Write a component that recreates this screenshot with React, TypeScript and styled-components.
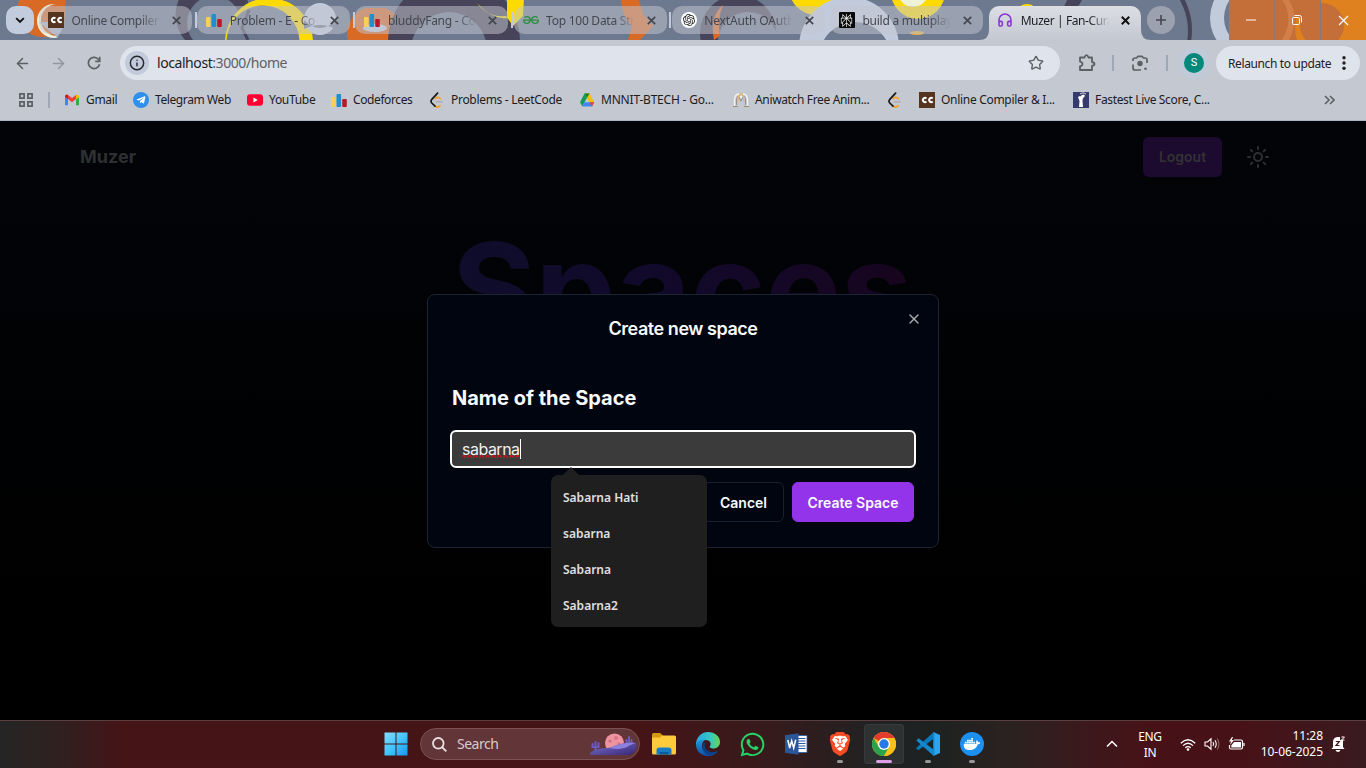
import React from "react";
import styled, { createGlobalStyle } from "styled-components";
import { ArrowLeft, ArrowRight, Headphones, Info, Star, Sun, X } from "lucide-react";
import { SiBrave, SiDocker, SiGeeksforgeeks, SiOpenai, SiPerplexity } from "react-icons/si";
import { FaTelegramPlane, FaWhatsapp } from "react-icons/fa";

const ui = `"Noto Sans", "Open Sans", sans-serif`;
const page = `Inter, sans-serif`;

const Global = createGlobalStyle`
  * { box-sizing: border-box; }
  body { margin: 0; background: #000; overflow: hidden; }
  svg { display: block; flex: none; }
  button { font: inherit; border: 0; padding: 0; }
`;

const Screen = styled.div`
  width: 1366px;
  height: 768px;
  display: flex;
  flex-direction: column;
  font-family: ${ui};
  overflow: hidden;
`;

/* ---------- tab strip ---------- */
const TabStrip = styled.div`
  position: relative;
  height: 40px;
  flex: none;
  display: flex;
  background: #6d798e;
  overflow: hidden;
`;
const StripArt = styled.svg`
  position: absolute;
  inset: 0;
`;
const TabSearch = styled.button`
  position: relative;
  width: 28px;
  height: 28px;
  margin: 6px 6px 0 6px;
  border-radius: 10px;
  background: #c2ccdc;
  display: grid;
  place-items: center;
  flex: none;
`;
const TabRow = styled.div`
  display: flex;
`;
const Tab = styled.div<{ $active?: boolean }>`
  position: relative;
  width: ${(p) => (p.$active ? 153 : 158.2)}px;
  height: 28px;
  margin-top: 6px;
  flex: none;
  display: flex;
  align-items: center;
  padding-left: 8px;
  &::before {
    content: "";
    position: absolute;
    z-index: 0;
    left: ${(p) => (p.$active ? 0 : -1)}px;
    top: 0;
    width: ${(p) => (p.$active ? 152 : 153)}px;
    height: ${(p) => (p.$active ? 34 : 28)}px;
    border-radius: ${(p) => (p.$active ? "10px 10px 0 0" : "10px")};
    background: ${(p) => (p.$active ? "linear-gradient(#dcdee4, #c4c8d1)" : "rgba(193,197,207,.52)")};
  }
  > * { position: relative; }
`;
const TabTitle = styled.span<{ $active?: boolean; $ls: number }>`
  width: 89px;
  margin-left: 7.500px;
  padding-top: 1px;
  white-space: nowrap;
  font-size: 12px;
  line-height: 18px;
  letter-spacing: ${(p) => p.$ls}px;
  color: ${(p) => (p.$active ? "#1d1e22" : "#45474e")};
  mask-image: linear-gradient(90deg, #000 68px, transparent 89px);
`;
const TabClose = styled.span`
  width: 16px;
  display: grid;
  place-items: center;
  margin-left: 8px;
`;
const TabDivider = styled.i`
  width: 2px;
  height: 16px;
  background: #c2cbda;
  margin-left: 10px;
`;
const Flare = styled.svg<{ $left: number }>`
  && {
    position: absolute;
    top: 24px;
    left: ${(p) => p.$left}px;
  }
`;
const NewTab = styled.button`
  position: relative;
  width: 28px;
  height: 28px;
  margin: 6px 0 0 5px;
  border-radius: 50%;
  background: #9ba1af;
  display: grid;
  place-items: center;
`;
const WindowControls = styled.div`
  position: relative;
  margin-left: auto;
  display: flex;
  width: 137px;
`;
const WinButton = styled.div`
  width: 46px;
  height: 40px;
  padding-right: 2px;
  display: grid;
  place-items: center;
  border-right: 1px solid #85777a;
  &:last-child { border: 0; width: 45px; padding-right: 0; }
`;

/* ---------- toolbar ---------- */
const Toolbar = styled.div`
  height: 46px;
  flex: none;
  display: flex;
  align-items: center;
  background: #c4c8d1;
  color: #5c6066;
`;
const NavButton = styled.div<{ $ml: number; $dim?: boolean }>`
  margin-left: ${(p) => p.$ml}px;
  opacity: ${(p) => (p.$dim ? 0.45 : 1)};
`;
const AddressBar = styled.div`
  width: 940px;
  height: 34px;
  margin-left: 19px;
  padding: 0 16px 0 5px;
  border-radius: 17px;
  background: #dfe3eb;
  display: flex;
  align-items: center;
  flex: none;
`;
const SiteInfo = styled.div`
  width: 24px;
  height: 24px;
  border-radius: 50%;
  background: #c1cbdb;
  color: #26282c;
  display: grid;
  place-items: center;
`;
const Url = styled.div`
  flex: 1;
  margin-left: 8px;
  font-size: 14px;
  letter-spacing: -0.43px;
  line-height: 20px;
  color: #5d6066;
  b { font-weight: 400; color: #1f2023; }
`;
const Rule = styled.i<{ $ml: number; $mr?: number }>`
  width: 2px;
  height: 16px;
  margin-left: ${(p) => p.$ml}px;
  margin-right: ${(p) => p.$mr ?? 0}px;
  background: #a0a7b7;
  flex: none;
`;
const Profile = styled.div`
  width: 32px;
  height: 32px;
  margin-left: 10px;
  border-radius: 50%;
  background: #c0cad9;
  display: grid;
  place-items: center;
  flex: none;
  span {
    width: 20px;
    height: 20px;
    border-radius: 50%;
    background: #00897b;
    color: #fff;
    font: 11px/20px Roboto, sans-serif;
    text-align: center;
  }
`;
const Relaunch = styled.div`
  width: 144px;
  height: 34px;
  margin-left: 6px;
  padding-left: 12px;
  border-radius: 17px;
  background: #dfe3eb;
  color: #1f2023;
  display: flex;
  align-items: center;
  flex: none;
  font-size: 12px;
  letter-spacing: -0.38px;
  white-space: nowrap;
  svg { margin-left: auto; margin-right: 14px; }
`;
const Bookmarks = styled.div`
  height: 35px;
  flex: none;
  display: flex;
  align-items: center;
  padding: 0 0 7px 19px;
  background: #c4c8d1;
  border-bottom: 1px solid #a9b4c4;
`;
const Bookmark = styled.div<{ $w: number; $ls?: number }>`
  width: ${(p) => p.$w}px;
  flex: none;
  display: flex;
  align-items: center;
  gap: 6px;
  font-size: 12px;
  line-height: 18px;
  color: #1b1c1f;
  white-space: nowrap;
  letter-spacing: ${(p) => p.$ls ?? -0.3}px;
`;

/* ---------- web page ---------- */
const Viewport = styled.main`
  position: relative;
  height: 599px;
  flex: none;
  background: linear-gradient(#020408, #000 80%);
  font-family: ${page};
`;
const SiteHeader = styled.header`
  display: flex;
  align-items: center;
  height: 72px;
  padding: 0 96px 0 80px;
  color: #2e2f31;
`;
const Brand = styled.div`
  flex: 1;
  padding-bottom: 2px;
  font-size: 18px;
  font-weight: 700;
`;
const Logout = styled.button`
  width: 79px;
  height: 40px;
  margin-right: 24px;
  padding-bottom: 1px;
  border-radius: 6px;
  background: #1d0a2f;
  color: #323233;
  font-size: 14px;
  font-weight: 600;
`;
const Hero = styled.h1`
  margin: 32px 0 0;
  padding-right: 2px;
  text-align: center;
  font-size: 128px;
  line-height: 128px;
  font-weight: 700;
  letter-spacing: -0.5px;
  span {
    background: linear-gradient(90deg, #0f0d2b, #12092a 50%, #18051f);
    background-clip: text;
    -webkit-background-clip: text;
    color: transparent;
  }
`;
const Dialog = styled.section`
  position: absolute;
  left: 427px;
  top: 173px;
  width: 512px;
  height: 254px;
  padding: 24px 24px 0;
  border: 1px solid #1b2432;
  border-radius: 8px;
  background: #01050f;
  color: #f8fafc;
`;
const DialogTitle = styled.h2`
  margin: 0;
  text-align: center;
  font-size: 18px;
  line-height: 20px;
  font-weight: 600;
  letter-spacing: -0.45px;
`;
const DialogClose = styled.span`
  position: absolute;
  right: 16px;
  top: 16px;
  color: #a9abb0;
`;
const FieldLabel = styled.div`
  margin-top: 45px;
  font-size: 20px;
  line-height: 28px;
  font-weight: 700;
`;
const Field = styled.div`
  height: 38px;
  width: 466px;
  margin: 18px 0 0 -2px;
  padding-left: 10px;
  border: 2px solid #fff;
  border-radius: 6px;
  background: #3b3b3b;
  display: flex;
  align-items: center;
  font-size: 16px;
  letter-spacing: -0.5px;
  color: #f1f1f1;
`;
const Typed = styled.span`
  position: relative;
  line-height: 20px;
  border-right: 1px solid #fff;
  svg { position: absolute; left: 0; top: 16px; }
`;
const Actions = styled.div`
  display: flex;
  justify-content: flex-end;
  gap: 8px;
  margin-top: 14px;
`;
const Action = styled.button<{ $primary?: boolean }>`
  height: 40px;
  width: ${(p) => (p.$primary ? 122 : 81)}px;
  border-radius: 6px;
  border: 1px solid ${(p) => (p.$primary ? "#9333ea" : "#17202e")};
  background: ${(p) => (p.$primary ? "#9333ea" : "transparent")};
  color: #f8fafc;
  font-size: 14px;
  font-weight: 600;
`;
const Autofill = styled.ul`
  position: absolute;
  left: 551px;
  top: 354px;
  width: 156px;
  height: 152px;
  margin: 0;
  padding: 5px 12px 3px;
  list-style: none;
  border-radius: 7px;
  background: #1f1f1f;
  color: #e0e0e0;
  font: 600 12px/36px ${ui};
  svg { position: absolute; left: 12px; top: -8px; }
`;
const Suggestion = styled.li`
  height: 36px;
`;

/* ---------- taskbar ---------- */
const Taskbar = styled.footer`
  height: 48px;
  flex: none;
  display: flex;
  align-items: center;
  padding: 0 0 1px 375.500px;
  border-top: 1px solid #5b4042;
  background: linear-gradient(90deg, #252525 0, #2f201f 60px, #451417 120px, #451417 640px, #381a1b 760px, #222122 870px, #1d2221 930px, #2a2220 1010px, #3a191c 1080px, #471217 1150px, #471217 1240px, #391a1e 1366px);
  color: #fff;
`;
const TaskButton = styled.div<{ $active?: boolean; $running?: boolean }>`
  position: relative;
  width: 40px;
  height: 40px;
  margin-right: 4px;
  border-radius: 4px;
  display: grid;
  place-items: center;
  flex: none;
  background: ${(p) => (p.$active ? "#2e3131" : "transparent")};
  box-shadow: ${(p) => (p.$active ? "inset 0 0 0 1px #383b3b" : "none")};
  &::after {
    content: "";
    position: absolute;
    display: ${(p) => (p.$running || p.$active ? "block" : "none")};
    bottom: 1px;
    left: ${(p) => (p.$active ? 12 : 17)}px;
    width: ${(p) => (p.$active ? 16 : 6)}px;
    height: 3px;
    border-radius: 2px;
    background: ${(p) => (p.$active ? "#dca0e6" : "#98989a")};
  }
`;
const SearchBox = styled.div`
  width: 220px;
  height: 32px;
  margin: 0 4px 0 0.500px;
  padding: 0 2px 0 11px;
  border: 1px solid #7a5254;
  border-radius: 16px;
  background: #623538;
  display: flex;
  align-items: center;
  flex: none;
  font-size: 14px;
  letter-spacing: -0.5px;
  color: #d9cbcc;
  span { flex: 1; margin-left: 10px; padding-bottom: 2px; }
`;
const Tray = styled.div`
  margin-left: auto;
  display: flex;
  align-items: center;
  padding-right: 20px;
  font-size: 12px;
  line-height: 16px;
`;
const Language = styled.div`
  width: 30px;
  margin: 0 15px 0 17px;
  padding-top: 2px;
  text-align: center;
  letter-spacing: -0.3px;
`;
const Clock = styled.div`
  width: 69px;
  margin: 0 8px 0 9px;
  text-align: right;
  white-space: nowrap;
  letter-spacing: -0.03px;
`;
const TrayIcon = styled.svg`
  margin-left: 8px;
`;

/* ---------- icons ---------- */
const CodeChef = () => (
  <svg width="16" height="16" viewBox="0 0 16 16">
    <rect width="16" height="16" fill="#54331f" />
    <g fill="none" stroke="#fff" strokeWidth="2">
      <path d="M7.400 6.400A2.100 2.100 0 1 0 7.400 9.600" />
      <path d="M13.700 6.400A2.100 2.100 0 1 0 13.700 9.600" />
    </g>
  </svg>
);
const Codeforces = () => (
  <svg width="16" height="16" viewBox="0 0 16 16">
    <rect x="0" y="5" width="4.6" height="10" rx="1" fill="#f8cf57" />
    <rect x="5.5" y="2" width="4.6" height="13" rx="1" fill="#1f8fcf" />
    <rect x="11.2" y="7" width="4.6" height="8" rx="1" fill="#b7192b" />
  </svg>
);
const RoundLogo = styled.span<{ $bg: string; $fg: string; $square?: boolean }>`
  width: 16px;
  height: 16px;
  border-radius: ${(p) => (p.$square ? "1px" : "50%")};
  background: ${(p) => p.$bg};
  color: ${(p) => p.$fg};
  display: grid;
  place-items: center;
  flex: none;
`;
const LeetCode = () => (
  <svg width="16" height="16" viewBox="0 0 16 16" fill="none" strokeLinecap="round" strokeLinejoin="round" strokeWidth="1.7">
    <path d="M6.5 14.3c1.6 1.2 3.4.9 4.6-.7M6.5 6.5c1.5-1.5 3.2-1.5 4.8.3" stroke="#f5a21d" />
    <path d="M7.2 9.8h6" stroke="#aaa9ab" strokeWidth="1.3" />
    <path d="M8.6 1.2 2.8 7.4c-1 1.1-1 2.4 0 3.6l3.2 3.2" stroke="#181818" />
  </svg>
);
const Gmail = () => (
  <svg width="16" height="16" viewBox="0 0 16 16">
    <path d="M1 13.2V4l3 2.2v7z" fill="#4285f4" />
    <path d="M12 6.2 15 4v9.2h-3z" fill="#34a853" />
    <path d="M1 4.5C1 2.5 3 2.3 4 3.1l4 3 4-3v4L8 10.200 4 7.100z" fill="#ea4335" />
    <path d="M12 3.100c1.200-.8 3-.5 3 1.400v.8l-3 2.200z" fill="#fbbc04" />
    <path d="M1 4.500c0-2 2-2.200 3-1.400v4L1 5z" fill="#c5221f" />
  </svg>
);
const YouTube = () => (
  <svg width="16" height="16" viewBox="0 0 16 16">
    <rect y="2.300" width="16" height="11.400" rx="3" fill="#f03" />
    <path d="M6.400 5.500v5L10.700 8z" fill="#fff" />
  </svg>
);
const Drive = () => (
  <svg width="16" height="16" viewBox="0 0 16 16">
    <path d="M5.500 1.500h5L8 5.800 3.300 14.500 1 10.300z" fill="#0f9d58" />
    <path d="M5.500 1.500h5l4.700 8.800h-4.900L8 5.800z" fill="#fbbc04" />
    <path d="M5.500 1.500h5L8 5.800z" fill="#188038" />
    <path d="m3.300 14.500 2.400-4.200h9.500L13 14.500z" fill="#4285f4" />
    <path d="M10.500 10.300h4.700L13 14.500z" fill="#ea4335" />
  </svg>
);
const Aniwatch = () => (
  <svg width="16" height="16" viewBox="0 0 16 16" fill="none">
    <path d="M1.500 14V7.500C2 4 4 2 5.500 2L8 6l2.500-4C12 2 14 4 14.500 7.500V14" stroke="#f3f3f3" strokeWidth="1.300" />
    <path d="M3.500 13V7.500C4 5 5 4 5.500 4L8 9l2.500-5c1 0 2 2 2 3.500V13" stroke="#8f8f96" />
    <path d="M5 10C5 5 6.500 2 8 2s3 3 3 8" stroke="#e4b569" strokeWidth="1.300" />
    <path d="M0 14.500h5M11 14.500h5" stroke="#a08d70" />
  </svg>
);
const Cricket = () => (
  <svg width="16" height="16" viewBox="0 0 16 16">
    <rect width="16" height="16" fill="#363a6f" />
    <path d="M5 5c1-1 1.500-.8 2.200-.5L9 3l2-.4L12 4 9.800 6.500 9.500 9l.5 6H6L6.500 9z" fill="#fff" />
    <path d="M7 2c2-1.500 4-1.300 6 0" stroke="#dcdce8" fill="none" />
  </svg>
);
const Cross = ({ color, size = 9, w = 1.7 }: { color: string; size?: number; w?: number }) => (
  <svg width={size} height={size} viewBox="0 0 9 9" stroke={color} strokeWidth={w}>
    <path d="m.8.8 7.400 7.400M8.200.8.800 8.200" />
  </svg>
);
const Windows = () => (
  <svg width="24" height="24" viewBox="0 0 24 24">
    <defs>
      <linearGradient id="win" x1="0" y1="0" x2="1" y2="1">
        <stop stopColor="#84dcff" />
        <stop offset=".5" stopColor="#43c6ff" />
        <stop offset="1" stopColor="#1298f0" />
      </linearGradient>
    </defs>
    <path d="M.5.5h11v11H.5zM12.500.5h11v11h-11zM.5 12.500h11v11H.5zM12.500 12.500h11v11h-11z" fill="url(#win)" />
  </svg>
);
const Desert = () => (
  <svg width="48" height="26" viewBox="0 0 48 26">
    <defs>
      <linearGradient id="dune" x1="0" y1="0" x2="1" y2="1">
        <stop stopColor="#7d72cd" />
        <stop offset="1" stopColor="#352575" />
      </linearGradient>
    </defs>
    <circle cx="25.500" cy="12" r="9.500" fill="#ee93a0" />
    <circle cx="21" cy="10" r="1.500" fill="#cf6a80" />
    <circle cx="27" cy="7" r="2" fill="#d67688" />
    <circle cx="30" cy="13" r="1.700" fill="#d67688" />
    <path d="M6.500 20v-9M3.500 13v3h6v-4M40 15V6M37.500 9v3h5V9" fill="none" stroke="#6b5bc0" strokeWidth="2" strokeLinecap="round" />
    <path d="M1 22c4-4 12-5 18-5 8-1 10-6 28-5 2 5-1 11-8 12H3c-2 0-2-1-2-2" fill="url(#dune)" />
    <path d="M19 17c8-1 10-6 28-5-8 2-9 6-19 6z" fill="#8b80dc" />
  </svg>
);
const Folder = () => (
  <svg width="24" height="24" viewBox="0 0 24 24">
    <path d="M0 2.500Q0 1 1.500 1H8l3 2.500V8H0z" fill="#d79a0c" />
    <path d="M0 5.500h8l2-2h12.500Q24 3.500 24 5v16q0 1.500-1.500 1.500h-21Q0 22.500 0 21z" fill="#fccb3b" />
    <path d="M4.500 22.500v-4q0-3 3-3h9q3 0 3 3v4z" fill="#157cc5" />
    <path d="M7.500 22.500V20h9v2.500z" fill="#0b5a9b" />
  </svg>
);
const Edge = () => (
  <svg width="24" height="24" viewBox="0 0 24 24">
    <defs>
      <linearGradient id="edgeTop" x1="0" x2="1">
        <stop stopColor="#2aa5e0" />
        <stop offset=".6" stopColor="#35c8c5" />
        <stop offset="1" stopColor="#66d84c" />
      </linearGradient>
      <linearGradient id="edgeLow" x1="0" y1="0" x2="0" y2="1">
        <stop stopColor="#2097d8" />
        <stop offset="1" stopColor="#0f4fa8" />
      </linearGradient>
    </defs>
    <path d="M0 11C.8 4.500 6 0 12 0c7 0 12 4.500 12 10 0 4-3 6.500-6.500 6.500-2.500 0-4.500-1-3.500-2.500C16 11 13.500 8 9.500 8 5 8 1.500 10 0 14z" fill="url(#edgeTop)" />
    <path d="M0 12.500C1 9 5 7 9 8c-3 2-3.500 5.500-2.500 8.500C8 21 13 22 17 21c2-.5 4-1.500 5.300-2.300C20 22 16.500 24 12 24 5 24 0 19 0 12.500" fill="url(#edgeLow)" />
    <path d="M9.500 10.500C8 13 9 18 13.500 19.500c3 1 6.500.5 8.500-.7C20 22 16 23.200 13 23 7 22 5 15 7.500 11z" fill="#0b3f86" />
  </svg>
);
const Word = () => (
  <svg width="24" height="24" viewBox="0 0 24 24">
    <path d="M12 3.500h11v17H12z" fill="#fff" stroke="#2c5aa6" strokeWidth=".8" />
    <path d="M14 6.500h7.500M14 9h7.500M14 11.500h7.500M14 14h7.500M14 16.500h7.500" stroke="#2c5aa6" strokeWidth="1.100" />
    <path d="m1 3.200 13.500-2v21.600L1 20.800z" fill="#2b579a" />
    <path d="m3.800 8 1.900 8 2-7.200L9.700 16l2-8.300" fill="none" stroke="#fff" strokeWidth="1.500" />
  </svg>
);
const BraveMark = () => (
  <svg width="24" height="24" viewBox="0 0 24 24">
    <path d="m7 3 10 0 3 4-1 9-7 6-7-6L4 7z" fill="#fff" />
    <SiBrave size={24} color="#fb4b22" />
  </svg>
);
const Chrome = () => (
  <svg width="24" height="24" viewBox="0 0 24 24">
    <circle cx="12" cy="12" r="12" fill="#fbc116" />
    <path d="M12 12 1.600 6A12 12 0 0 1 22.400 6z" fill="#e33b2e" />
    <path d="M1.600 6A12 12 0 0 0 12 24l5.200-9L12 12 6.800 15z" fill="#2ba24c" />
    <path d="M12 6h10.400A12 12 0 0 1 12 24l5.200-9z" fill="#fbc116" />
    <circle cx="12" cy="12" r="6" fill="#fff" />
    <circle cx="12" cy="12" r="4.700" fill="#2978e8" />
  </svg>
);
const VSCode = () => (
  <svg width="24" height="24" viewBox="0 0 24 24">
    <path d="M17.500.3 1 15.300 0 16l2.300 2.200L18 6.500z" fill="#0879bd" />
    <path d="M17.500 23.700.3 8.500 2.500 6.300 18 17.700z" fill="#1488cc" />
    <path d="M17.300 0 24 3v18l-6.700 3V0z" fill="#2ba5ef" />
    <path d="m17.300 0 1 .5v23l-1 .5z" fill="#1580c4" />
  </svg>
);
const Puzzle = () => (
  <svg width="18" height="18" viewBox="0 0 18 18" fill="none" stroke="#5c6066" strokeWidth="1.800" strokeLinejoin="round">
    <path d="M2 3.500h4.500q.7-2.300 2-2.300t2 2.300H14V8q2.500.6 2.500 2t-2.500 2v4H2v-3.700q2.500-.5 2.500-2.300T2 7.600z" />
  </svg>
);
const Lens = () => (
  <svg width="16" height="16" viewBox="0 0 16 16" fill="none" stroke="#5c6066" strokeWidth="1.700">
    <path d="M1 6V5q0-2 2-2h1.500L6 1.300h4L11.500 3H13q2 0 2 2v3M1 9.500V13q0 2 2 2h6" />
    <circle cx="8" cy="8.500" r="2.700" fill="#5c6066" stroke="none" />
    <circle cx="13.500" cy="13.800" r="1.300" fill="#5c6066" stroke="none" />
  </svg>
);
const ThemeArt = () => (
  <StripArt width="1366" height="40" viewBox="0 0 1366 40">
    <circle cx="43" cy="11" r="26" fill="#d96a26" />
    <circle cx="54" cy="21" r="17" fill="#eef0dc" />
    <circle cx="57" cy="20" r="16" fill="#d96a26" />
    <path d="M39 22h40v18H60z" fill="#a9b2c4" />
    <path d="M66 0h120v40H56l8-14z" fill="#6d798e" />
    <circle cx="213" cy="15" r="37.500" fill="#474359" />
    <circle cx="214" cy="23" r="27" fill="#6d798e" />
    <circle cx="269" cy="42" r="44" fill="#fedb00" />
    <circle cx="263" cy="42" r="36.500" fill="#6d798e" />
    <path d="m249 10-7 18 6 12" fill="none" stroke="#474359" strokeWidth="3" />
    <circle cx="320" cy="19" r="16" fill="#c2cbdc" />
    <path d="M304 20q16 16 32 0v9q-16-8-32 0z" fill="#6d798e" />
    <circle cx="375" cy="34" r="28" fill="#d96a26" />
    <path d="M347 0h60v8h-60z" fill="#6d798e" />
    <circle cx="454" cy="42" r="66" fill="#474359" />
    <circle cx="449" cy="50" r="38" fill="#6d798e" />
    <ellipse cx="375" cy="28" rx="12" ry="4" fill="#c2cbdc" />
    <path d="M477 3q15 17 30 15V-2h17l-1 18-10 10-7-10q-18 2-29-13" fill="#fedb00" />
    <path d="M621 0h18l4 14 10 12-13 14h-12l4-14q-10-10-11-26" fill="#d96a26" />
    <circle cx="738" cy="33" r="38" fill="#474359" />
    <circle cx="748" cy="42" r="30" fill="#6d798e" />
    <path d="M723 5q-14 12-9 35l6-4q-3-17 3-31" fill="#d96a26" />
    <circle cx="816" cy="-12" r="27" fill="#fedb00" />
    <circle cx="849" cy="47" r="50" fill="#c2cbdc" />
    <circle cx="855" cy="58" r="36" fill="#6d798e" />
    <circle cx="918" cy="-8" r="27" fill="#fedb00" />
    <circle cx="913" cy="-8" r="15" fill="#eef3d8" />
    <ellipse cx="917" cy="33" rx="7" ry="2" fill="#dfaa46" />
    <circle cx="1027" cy="15" r="11" fill="#fedb00" />
    <circle cx="1126" cy="30" r="66" fill="#474359" />
    <circle cx="1125" cy="31" r="63" fill="#6d798e" />
    <path d="M1068 0h14l-6 10h-14z" fill="#474359" />
    <circle cx="1250" cy="18" r="40" fill="#c2cbdc" />
    <circle cx="1255" cy="18" r="31" fill="#6d798e" />
    <path d="M1229 0h137v40h-137z" fill="#c46e39" />
    <path d="M1283-4q17 22 0 48" fill="none" stroke="#d37f49" strokeWidth="6" />
    <circle cx="1331" cy="28" r="36" fill="#df811e" />
    <circle cx="1322" cy="25" r="22" fill="#c46e39" />
    <path d="M1296 0h24v5q-10 3-18 13h-6z" fill="#c46e39" />
    <path d="M1352 0h14v40h-18z" fill="#df811e" />
  </StripArt>
);

const tabs = [
  { title: "Online Compiler", icon: <CodeChef />, ls: -0.3 },
  { title: "Problem - E - Co", icon: <Codeforces />, ls: -0.25 },
  { title: "bluddyFang - Co", icon: <Codeforces />, ls: -0.25 },
  { title: "Top 100 Data Str", icon: <SiGeeksforgeeks size={16} color="#2f8d46" />, ls: -0.25 },
  { title: "NextAuth OAuth", icon: <RoundLogo $bg="#fff" $fg="#222"><SiOpenai size={12} /></RoundLogo>, ls: -0.15 },
  { title: "build a multiplay", icon: <RoundLogo $bg="#080808" $fg="#fff" $square><SiPerplexity size={13} /></RoundLogo>, ls: -0.25 },
];

const bookmarks = [
  { text: "Gmail", w: 69, icon: <Gmail /> },
  { text: "Telegram Web", w: 114, icon: <RoundLogo $bg="#2f8fec" $fg="#fff"><FaTelegramPlane size={10} /></RoundLogo>, ls: -0.4 },
  { text: "YouTube", w: 84, icon: <YouTube /> },
  { text: "Codeforces", w: 98, icon: <Codeforces />, ls: -0.4 },
  { text: "Problems - LeetCode", w: 150, icon: <LeetCode /> },
  { text: "MNNIT-BTECH - Go...", w: 154, icon: <Drive />, ls: -0.2 },
  { text: "Aniwatch Free Anim...", w: 154, icon: <Aniwatch />, ls: -0.35 },
  { text: "", w: 32, icon: <LeetCode /> },
  { text: "Online Compiler & I...", w: 154, icon: <CodeChef /> },
  { text: "Fastest Live Score, C...", w: 251, icon: <Cricket />, ls: -0.35 },
];

export default function App() {
  return (
    <Screen>
      <Global />
      <TabStrip>
        <ThemeArt />
        <TabSearch>
          <svg width="10" height="7" viewBox="0 0 10 7" fill="none" stroke="#111" strokeWidth="1.900"><path d="m1.200 1.200 3.800 3.800 3.800-3.800" /></svg>
        </TabSearch>
        <TabRow>
          {tabs.map((t, i) => (
            <Tab key={t.title}>
              {t.icon}
              <TabTitle $ls={t.ls}>{t.title}</TabTitle>
              <TabClose><Cross color="#45474e" /></TabClose>
              {i < tabs.length - 1 && <TabDivider />}
            </Tab>
          ))}
          <Tab $active>
            <Flare $left={-10} width="10" height="10" viewBox="0 0 10 10"><path d="M10 0v10H0Q10 10 10 0" fill="#c5c9d2" /></Flare>
            <Headphones size={16} color="#8a35d6" strokeWidth={2.400} />
            <TabTitle $active $ls={-0.4}>Muzer | Fan-Cura</TabTitle>
            <TabClose><Cross color="#111" w={2} /></TabClose>
            <Flare $left={152} width="10" height="10" viewBox="0 0 10 10"><path d="M0 0v10h10Q0 10 0 0" fill="#c5c9d2" /></Flare>
          </Tab>
        </TabRow>
        <NewTab>
          <svg width="10" height="10" viewBox="0 0 10 10" stroke="#45474e" strokeWidth="1.600"><path d="M5 0v10M0 5h10" /></svg>
        </NewTab>
        <WindowControls>
          <WinButton><svg width="10" height="2"><path d="M0 1h10" stroke="#fff" /></svg></WinButton>
          <WinButton>
            <svg width="10" height="10" viewBox="0 0 10 10" fill="none" stroke="#fff"><rect x=".5" y="2.500" width="7" height="7" rx="1" /><path d="M2.500.5h5q2 0 2 2v5" /></svg>
          </WinButton>
          <WinButton><Cross color="#fff" size={11} w={1} /></WinButton>
        </WindowControls>
      </TabStrip>

      <Toolbar>
        <NavButton $ml={14}><ArrowLeft size={17} strokeWidth={2.200} /></NavButton>
        <NavButton $ml={19} $dim><ArrowRight size={17} strokeWidth={2.200} /></NavButton>
        <NavButton $ml={20}>
          <svg width="14" height="14" viewBox="0 0 14 14" fill="none" stroke="currentColor" strokeWidth="1.700">
            <path d="M12.500 8.200A5.600 5.600 0 1 1 11 3l1.500 1.700" />
            <path d="M12.700.8v4.500H8.200" />
          </svg>
        </NavButton>
        <AddressBar>
          <SiteInfo><Info size={16} strokeWidth={2.200} /></SiteInfo>
          <Url><b>localhost</b>:3000/home</Url>
          <Star size={16} strokeWidth={2.100} />
        </AddressBar>
        <NavButton $ml={18}><Puzzle /></NavButton>
        <Rule $ml={16} />
        <NavButton $ml={18}><Lens /></NavButton>
        <Rule $ml={18} />
        <Profile><span>S</span></Profile>
        <Relaunch>
          Relaunch to update
          <svg width="4" height="14" viewBox="0 0 4 14" fill="#222"><circle cx="2" cy="1.800" r="1.700" /><circle cx="2" cy="7" r="1.700" /><circle cx="2" cy="12.200" r="1.700" /></svg>
        </Relaunch>
      </Toolbar>

      <Bookmarks>
        <svg width="14" height="14" viewBox="0 0 14 14" fill="none" stroke="#5c6066" strokeWidth="1.700">
          <path d="M.9.9h4.200v4.200H.9zM8.900.9h4.200v4.200H8.900zM.9 8.900h4.200v4.200H.9zM8.900 8.900h4.200v4.200H8.900z" />
        </svg>
        <Rule $ml={15} $mr={14} />
        {bookmarks.map((b, i) => (
          <Bookmark key={i} $w={b.w} $ls={b.ls}>{b.icon}{b.text}</Bookmark>
        ))}
        <svg width="11" height="10" viewBox="0 0 11 10" fill="none" stroke="#5c6066" strokeWidth="1.600"><path d="m1 1 4 4-4 4M6 1l4 4-4 4" /></svg>
      </Bookmarks>

      <Viewport>
        <SiteHeader>
          <Brand>Muzer</Brand>
          <Logout>Logout</Logout>
          <Sun size={24} strokeWidth={2} />
        </SiteHeader>
        <Hero><span>Spaces</span></Hero>
        <Dialog>
          <DialogTitle>Create new space</DialogTitle>
          <DialogClose><X size={16} strokeWidth={2} /></DialogClose>
          <FieldLabel>Name of the Space</FieldLabel>
          <Field>
            <Typed>
              sabarna
              <svg width="57" height="3" viewBox="0 0 57 3" fill="none">
                <path d="M0 2q1.500-3 3 0t3 0 3 0 3 0 3 0 3 0 3 0 3 0 3 0 3 0 3 0 3 0 3 0 3 0 3 0 3 0 3 0 3 0 3 0" stroke="#e0141c" strokeWidth="1.100" />
              </svg>
            </Typed>
          </Field>
          <Actions>
            <Action>Cancel</Action>
            <Action $primary>Create Space</Action>
          </Actions>
        </Dialog>
        <Autofill>
          <svg width="16" height="8" viewBox="0 0 16 8"><path d="M0 8 8 0l8 8z" fill="#1f1f1f" /></svg>
          <Suggestion>Sabarna Hati</Suggestion>
          <Suggestion>sabarna</Suggestion>
          <Suggestion>Sabarna</Suggestion>
          <Suggestion>Sabarna2</Suggestion>
        </Autofill>
      </Viewport>

      <Taskbar>
        <TaskButton><Windows /></TaskButton>
        <SearchBox>
          <svg width="15" height="15" viewBox="0 0 15 15" fill="none" stroke="#eadfe0" strokeWidth="1.800"><circle cx="6.300" cy="6.300" r="5.300" /><path d="m10 10 4.300 4.300" /></svg>
          <span>Search</span>
          <Desert />
        </SearchBox>
        <TaskButton><Folder /></TaskButton>
        <TaskButton><Edge /></TaskButton>
        <TaskButton><FaWhatsapp size={27} color="#25d366" /></TaskButton>
        <TaskButton><Word /></TaskButton>
        <TaskButton $running><BraveMark /></TaskButton>
        <TaskButton $active><Chrome /></TaskButton>
        <TaskButton $running><VSCode /></TaskButton>
        <TaskButton $running>
          <svg width="24" height="24" viewBox="0 0 24 24"><circle cx="12" cy="12" r="12" fill="#1d8ff0" /><SiDocker size={17} x={3.500} y={3.500} color="#fff" /></svg>
        </TaskButton>
        <Tray>
          <svg width="12" height="8" viewBox="0 0 12 8" fill="none" stroke="#fff" strokeWidth="1.500"><path d="m1 6.500 5-5 5 5" /></svg>
          <Language>ENG<br />IN</Language>
          <svg width="16" height="13" viewBox="0 0 16 13" fill="none" stroke="#fff" strokeWidth="1.300">
            <path d="M.8 5.200q7.200-7 14.400 0M3 7.600q5-4.700 10 0M5.300 9.800q2.700-2.400 5.400 0" /><circle cx="8" cy="11.500" r="1.300" fill="#fff" stroke="none" />
          </svg>
          <TrayIcon width="16" height="14" viewBox="0 0 16 14" fill="none" stroke="#fff" strokeWidth="1.100">
            <path d="M1 5h2.500L7 1.800v10.400L3.500 9H1zM9 5q1.300 2 0 4M11 3.200q2.500 3.800 0 7.600" /><path d="M13.200 1.500q3.500 5.500 0 11" opacity=".35" />
          </TrayIcon>
          <TrayIcon width="17" height="14" viewBox="0 0 17 14" fill="none" stroke="#fff" strokeWidth="1.200">
            <path d="M6 3h7q1.500 0 1.500 1.500v6Q14.500 12 13 12H3Q1.500 12 1.500 10.500V8M16 6v3" /><path d="M6 5h7v5.500H3.300V8.500z" fill="#fff" stroke="none" /><path d="M4 0 1 4.500h2L2 8l4-5H3.800L5 0z" fill="#fff" stroke="none" />
          </TrayIcon>
          <Clock>11:28<br />10-06-2025</Clock>
          <svg width="15" height="16" viewBox="0 0 15 16">
            <path d="M2 11V6q0-4.500 4.500-5H9v3h3v7l1.500 2H.5zM4.500 14h5q-.8 2-2.500 2t-2.500-2" fill="#fff" />
            <path d="M4.800 5.500h3.500L5 9.500h3.500" fill="none" stroke="#451417" strokeWidth="1.200" />
            <path d="M10.500 1h3l-3 3h3" fill="none" stroke="#fff" strokeWidth="1" />
          </svg>
        </Tray>
      </Taskbar>
    </Screen>
  );
}
